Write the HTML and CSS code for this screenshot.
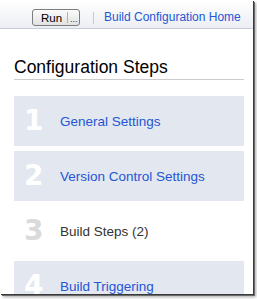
FILE: index.html
```html
<!DOCTYPE html>
<html>
<head>
<meta charset="utf-8">
<link rel="stylesheet" href="styles.css">
</head>
<body>
<div class="frame">
  <div class="topbar">
    <div class="btn"><span class="run">Run</span><span class="bsep"></span><span class="more">...</span></div>
    <span class="vsep"></span>
    <a class="toplink" href="#">Build Configuration Home</a>
  </div>
  <div class="main">
    <h2 class="title">Configuration Steps</h2>
    <div class="steps">
      <div class="step filled"><span class="num">1</span><a class="label" href="#">General Settings</a></div>
      <div class="step filled"><span class="num">2</span><a class="label" href="#">Version Control Settings</a></div>
      <div class="step current"><span class="num">3</span><span class="label">Build Steps (2)</span></div>
      <div class="step filled"><span class="num">4</span><a class="label" href="#">Build Triggering</a></div>
    </div>
  </div>
</div>
</body>
</html>
```
FILE: styles.css
```css
html, body {
  margin: 0;
  padding: 0;
  background: #ffffff;
  overflow: hidden;
}
body {
  font-family: "Liberation Sans", Arial, sans-serif;
  width: 257px;
  height: 299px;
}
.frame {
  width: 253px;
  height: 294px;
  background: #ffffff;
  box-shadow: 1px 1px 0 #3a3a3a, 2px 2px 0 #6a6a6a, 3px 3px 3px rgba(0, 0, 0, 0.35);
  overflow: hidden;
}
.topbar {
  height: 29px;
  box-sizing: border-box;
  padding: 9px 0 0 32px;
  display: flex;
  align-items: flex-start;
  background: linear-gradient(#ffffff, #eceef3);
  border-bottom: 1px solid #c7cdd9;
}
.btn {
  width: 48px;
  height: 17px;
  box-sizing: border-box;
  border: 1px solid #7d7d7d;
  border-radius: 3px;
  background: linear-gradient(#fbfbfb, #e2e2e2);
  display: flex;
  align-items: center;
  font-size: 11.5px;
  color: #000;
}
.run {
  padding-left: 8px;
  padding-right: 5px;
}
.bsep {
  width: 1px;
  height: 11px;
  background: #b0b0b0;
}
.more {
  padding-left: 2px;
  font-size: 9px;
  color: #333;
  align-self: flex-end;
  line-height: 12px;
}
.vsep {
  width: 1px;
  height: 12px;
  margin: 3px 0 0 13px;
  background: #c9c9c9;
}
.toplink {
  margin-left: 10px;
  font-size: 12px;
  line-height: 17px;
  color: #2456d6;
  text-decoration: none;
}
.main {
  padding: 0 9px 0 14px;
}
.title {
  margin: 28px 0 0 0;
  padding-bottom: 2px;
  font-size: 17.5px;
  line-height: 20px;
  font-weight: normal;
  color: #000;
  border-bottom: 1px solid #cccccc;
}
.steps {
  margin-top: 16px;
  display: flex;
  flex-direction: column;
  gap: 5px;
}
.step {
  height: 50px;
  display: flex;
  align-items: center;
  padding-left: 10px;
}
.step.filled {
  background: #e3e7ef;
}
.num {
  width: 36px;
  font-family: "DejaVu Sans", Verdana, sans-serif;
  font-weight: bold;
  font-size: 28px;
  line-height: 28px;
  color: #ffffff;
}
.current .num {
  color: #dadada;
}
.label {
  font-size: 13.5px;
  color: #2456d6;
  text-decoration: none;
}
.current .label {
  color: #333333;
}
```
